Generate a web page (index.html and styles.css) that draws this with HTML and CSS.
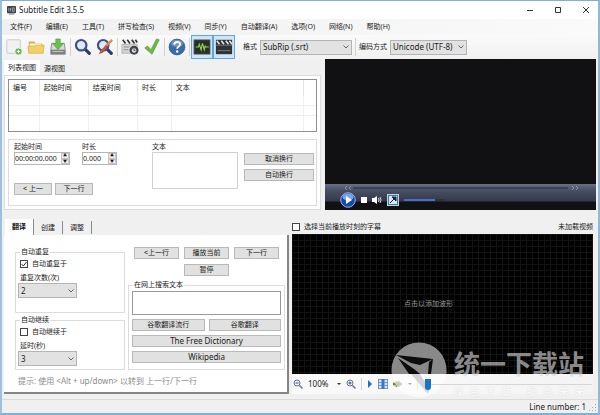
FILE: index.html
```html
<!DOCTYPE html>
<html lang="zh-CN">
<head>
    <meta charset="UTF-8">
    <meta name="viewport" content="width=device-width, initial-scale=1.0">
    <title>Subtitle Edit 3.5.5</title>
    <link rel="stylesheet" href="styles.css">
</head>
<body>
    <div class="window">
        <header class="titlebar">
            <svg class="app-icon" viewBox="0 0 10 10"><rect width="10" height="8" rx="1" fill="#3c4246"/><path d="M2 2v4M4 2v4M6 2h2v4H6z" stroke="#a9b0b3" fill="none"/><path d="M2 9h6" stroke="#777"/></svg>
            <span class="title">Subtitle Edit 3.5.5</span>
            <div class="window-buttons">
                <button aria-label="Minimize"><svg viewBox="0 0 8 8"><path d="M1 4.5h6" stroke="#333"/></svg></button>
                <button aria-label="Maximize"><svg viewBox="0 0 8 8"><path d="M1.5 1.5h5v5h-5z" stroke="#333" fill="none"/></svg></button>
                <button aria-label="Close"><svg viewBox="0 0 8 8"><path d="M1 1l6 6M7 1L1 7" stroke="#333"/></svg></button>
            </div>
        </header>

        <nav class="menu">
            <a href="#">文件(F)</a>
            <a href="#">编辑(E)</a>
            <a href="#">工具(T)</a>
            <a href="#">拼写检查(S)</a>
            <a href="#">视频(V)</a>
            <a href="#">同步(Y)</a>
            <a href="#">自动翻译(A)</a>
            <a href="#">选项(O)</a>
            <a href="#">网络(N)</a>
            <a href="#">帮助(H)</a>
        </nav>

        <div class="toolbar">
            <button class="tool" aria-label="New"><svg viewBox="0 0 20 20"><rect x="2" y="2" width="15" height="15" rx="1" fill="#f0f2f1" stroke="#c3c8c6"/><circle cx="15" cy="15" r="4" fill="#5fb548" stroke="#e4f3df"/><path d="M15 13v4M13 15h4" stroke="#fff" stroke-width="1.3"/></svg></button>
            <button class="tool" aria-label="Open"><svg viewBox="0 0 20 20"><path d="M2 4h6l2 2h7v10H2z" fill="#d9ab43"/><path d="M3 6h13v4H3z" fill="#fff4cf"/><path d="M1 9h7l2-1h9l-1 9H2z" fill="#f3cf68" stroke="#d6a83f" stroke-width=".7"/></svg></button>
            <button class="tool" aria-label="Save"><svg viewBox="0 0 20 20"><path d="M3 6h14l1 7v5H2v-5z" fill="#d6d8da" stroke="#6f7478" stroke-width=".8"/><path d="M2 13h16v5H2z" fill="#7d8286"/><path d="M4 15h12" stroke="#c4c9cc"/><path d="M7.500 1h5v5H16l-6 7-6-7h3.500z" fill="#6cc04a" stroke="#4d9a35" stroke-width=".6"/></svg></button>
            <span class="separator"></span>
            <button class="tool" aria-label="Find"><svg viewBox="0 0 20 20"><path d="M12 12l5 5" stroke="#2d3a70" stroke-width="3.500" stroke-linecap="round"/><circle cx="8" cy="8" r="5.800" fill="#dfe9f7" stroke="#3c4d92" stroke-width="2.400"/></svg></button>
            <button class="tool" aria-label="Replace"><svg viewBox="0 0 20 20"><path d="M12 12l5 5" stroke="#2d3a70" stroke-width="3.500" stroke-linecap="round"/><circle cx="8" cy="8" r="5.800" fill="#dfe9f7" stroke="#3c4d92" stroke-width="2.400"/><path d="M18 2l-8 8" stroke="#e08a3c" stroke-width="2.600"/><path d="M11 8l2 2-5 6-5 2 2-4z" fill="#b65a35"/></svg></button>
            <span class="separator"></span>
            <button class="tool" aria-label="Visual sync"><svg viewBox="0 0 20 20"><path d="M1 7h17v10H1z" fill="#d3d5d6" stroke="#8d9194" stroke-width=".6"/><path d="M1 2h17v4H1z" fill="#eee"/><path d="M2 2l3 4M7 2l3 4M12 2l3 4M16 2l2 3" stroke="#333" stroke-width="1.800"/><path d="M3 10h6M3 13h5" stroke="#888"/><circle cx="14.500" cy="13.500" r="5" fill="#42464a"/><circle cx="14.500" cy="14" r="2.500" fill="#d8dadb"/><path d="M14.500 14v-2M14.500 14h1.500" stroke="#222" stroke-width=".8"/></svg></button>
            <button class="tool" aria-label="Spell check"><svg viewBox="0 0 20 20"><path d="M2 11l3-2 4 4 6-12 3 1-8 16z" fill="#6dbb45" stroke="#4f9f32" stroke-width=".8"/></svg></button>
            <span class="separator"></span>
            <button class="tool" aria-label="Help"><svg viewBox="0 0 20 20"><circle cx="10" cy="10" r="8.800" fill="#3a6ca8" stroke="#28517f" stroke-width=".8"/><ellipse cx="10" cy="6" rx="6.500" ry="4" fill="#6b95c6"/><path d="M7 7.500c0-4 6.500-4 6.500-.5 0 2.500-3.300 2.200-3.300 5" fill="none" stroke="#fff" stroke-width="2"/><circle cx="10.200" cy="15" r="1.300" fill="#fff"/></svg></button>
            <span class="separator"></span>
            <button class="tool pressed" aria-label="Toggle waveform"><svg viewBox="0 0 20 20"><rect x="1" y="2" width="18" height="16" fill="#2a2f2a" stroke="#777" stroke-width=".8"/><path d="M3 10h3l1-3 2 6 1.500-7 2 7 1-4 1 1h3" fill="none" stroke="#86d64c" stroke-width="1.300"/></svg></button>
            <button class="tool pressed" aria-label="Toggle video"><svg viewBox="0 0 20 20"><path d="M1 2h18v16H1z" fill="#303234"/><path d="M2 3l3 4M7 3l3 4M12 3l3 4M16 3l3 4" stroke="#e4e4e4" stroke-width="1.800"/><path d="M1 8h18M3 14h14" stroke="#90959a" stroke-width=".8"/></svg></button>
            <label for="format" class="format-label">格式</label>
            <select id="format" class="format"><option>SubRip (.srt)</option></select>
            <span class="separator"></span>
            <label for="encoding">编码方式</label>
            <select id="encoding" class="encoding"><option>Unicode (UTF-8)</option></select>
        </div>

        <main class="top-row">
            <section class="list-view">
                <div class="tabs">
                    <button class="tab active">列表视图</button>
                    <button class="tab">源视图</button>
                </div>
                <div class="list-panel">
                    <table class="subtitles">
                        <colgroup><col class="col-number"><col class="col-time"><col class="col-time"><col class="col-duration"><col class="col-text"><col></colgroup>
                        <thead>
                            <tr><th>编号</th><th>起始时间</th><th>结束时间</th><th>时长</th><th>文本</th><th></th></tr>
                        </thead>
                        <tbody>
                            <tr><td></td><td></td><td></td><td></td><td></td><td></td></tr>
                            <tr><td></td><td></td><td></td><td></td><td></td><td></td></tr>
                            <tr><td></td><td></td><td></td><td></td><td></td><td></td></tr>
                        </tbody>
                    </table>
                    <div class="editor">
                        <div class="timing">
                            <div class="timing-fields">
                                <div class="field start-field">
                                    <label for="start">起始时间</label>
                                    <div class="spinner"><input id="start" type="text" value="00:00:00.000"><div class="spin"><button aria-label="Start up">▲</button><button aria-label="Start down">▼</button></div></div>
                                </div>
                                <div class="field duration-field">
                                    <label for="duration">时长</label>
                                    <div class="spinner"><input id="duration" type="text" value="0.000"><div class="spin"><button aria-label="Duration up">▲</button><button aria-label="Duration down">▼</button></div></div>
                                </div>
                            </div>
                            <div class="line-buttons">
                                <button class="btn">&lt; 上一</button>
                                <button class="btn">下一行</button>
                            </div>
                        </div>
                        <div class="field text-field">
                            <label for="text">文本</label>
                            <textarea id="text"></textarea>
                        </div>
                        <div class="wrap-buttons">
                            <button class="btn">取消换行</button>
                            <button class="btn">自动换行</button>
                        </div>
                    </div>
                </div>
            </section>

            <section class="video">
                <div class="screen"></div>
                <div class="player">
                    <svg class="seek" viewBox="0 0 270 8" preserveAspectRatio="none"><path d="M28 4h214" stroke="#252b40"/><path d="M22 2l-2 2 2 2M26 2l-2 2 2 2M246 2l2 2-2 2M250 2l2 2-2 2" fill="none" stroke="#9ba3b8" stroke-width=".8"/></svg>
                    <div class="player-controls">
                        <button aria-label="Play"><svg width="16" height="16" viewBox="0 0 16 16"><circle cx="8" cy="8" r="7.300" fill="#1749a8" stroke="#93b5ea"/><ellipse cx="8" cy="5" rx="5.500" ry="3.500" fill="#7da5e5"/><path d="M6 4l6 4-6 4z" fill="#fff"/></svg></button>
                        <button aria-label="Stop"><svg width="6" height="6" viewBox="0 0 6 6"><path d="M0 0h6v6H0z" fill="#fff"/></svg></button>
                        <button aria-label="Mute"><svg width="10" height="10" viewBox="0 0 10 10"><path d="M0 3h2l3-2v8L2 7H0z" fill="#fff"/><path d="M6.500 3q1 2 0 4M8 2q2 3 0 6" fill="none" stroke="#d0d5df"/></svg></button>
                        <button aria-label="Full screen"><svg width="12" height="12" viewBox="0 0 12 12"><rect x=".5" y=".5" width="11" height="11" fill="#3b7ba5" stroke="#c3d4df"/><path d="M2 2h8v8H2z" fill="#dbe6ec"/><path d="M3 9l4-4M5 3h4v4z" fill="#162637" stroke="#162637"/></svg></button>
                        <div class="volume"><div class="volume-level"></div></div>
                    </div>
                </div>
            </section>
        </main>

        <div class="bottom-row">
            <section class="modes">
                <div class="tabs mode-tabs">
                    <button class="tab active">翻译</button>
                    <button class="tab">创建</button>
                    <button class="tab">调整</button>
                </div>
                <div class="mode-panel">
                    <div class="mode-columns">
                        <div class="options">
                            <fieldset class="repeat">
                                <legend>自动重复</legend>
                                <label class="check"><input type="checkbox" checked>自动重复于</label>
                                <label for="repeat-count">重复次数(次)</label>
                                <select id="repeat-count"><option>2</option></select>
                            </fieldset>
                            <fieldset>
                                <legend>自动继续</legend>
                                <label class="check"><input type="checkbox">自动继续于</label>
                                <label for="delay">延时(秒)</label>
                                <select id="delay"><option>3</option></select>
                            </fieldset>
                        </div>
                        <div class="actions">
                            <div class="play-buttons">
                                <button class="btn">&lt;上一行</button>
                                <button class="btn">播放当前</button>
                                <button class="btn">下一行</button>
                                <button class="btn pause">暂停</button>
                            </div>
                            <fieldset class="search">
                                <legend><label for="search">在网上搜索文本</label></legend>
                                <input id="search" type="text">
                                <button class="btn">谷歌翻译流行</button>
                                <button class="btn">谷歌翻译</button>
                                <button class="btn wide">The Free Dictionary</button>
                                <button class="btn wide">Wikipedia</button>
                            </fieldset>
                        </div>
                    </div>
                    <p class="hint">提示: 使用 &lt;Alt + up/down&gt; 以转到 上一行/下一行</p>
                </div>
            </section>

            <section class="wave">
                <div class="wave-header">
                    <label class="check"><input type="checkbox">选择当前播放时刻的字幕</label>
                    <span>未加载视频</span>
                </div>
                <div class="waveform">点击以添加波形</div>
                <div class="wave-toolbar">
                    <button aria-label="Zoom out"><svg width="10" height="10" viewBox="0 0 10 10"><circle cx="4" cy="4" r="3" fill="#eef3fa" stroke="#65758f"/><path d="M6.500 6.500l3 3" stroke="#65758f" stroke-width="1.500"/><path d="M2.500 4h3" stroke="#334d80"/></svg></button>
                    <button class="zoom-level"><span>100%</span><span class="caret"></span></button>
                    <button aria-label="Zoom in"><svg width="10" height="10" viewBox="0 0 10 10"><circle cx="4" cy="4" r="3" fill="#eef3fa" stroke="#65758f"/><path d="M6.500 6.500l3 3" stroke="#65758f" stroke-width="1.500"/><path d="M2.500 4h3M4 2.500v3" stroke="#334d80"/></svg></button>
                    <span class="separator"></span>
                    <button aria-label="Play"><svg width="6" height="8" viewBox="0 0 6 8"><path d="M1 0l4 4-4 4z" fill="#2467d8"/></svg></button>
                    <button aria-label="Lock"><svg width="10" height="10" viewBox="0 0 10 10"><path d="M0 0h10v10H0z" fill="#d5e3f8"/><path d="M3.500 0h3v10h-3z" fill="#3b70c8"/><path d="M0 .5h10M0 3.500h10M0 6.500h10M0 9.500h10M.5 0v10M9.500 0v10" stroke="#4c7cc6" stroke-width=".7"/></svg></button>
                    <button class="speed" aria-label="Speed"><svg width="10" height="8" viewBox="0 0 10 8"><path d="M0 3h3V1l3 3-3 3V5H0zM5 3V1l4 3-4 3V5z" fill="#6f9a45" stroke="#40602c" stroke-width=".5"/></svg><span class="caret"></span></button>
                    <span class="separator"></span>
                    <input class="position" type="range" min="0" max="100" value="1" aria-label="Position">
                </div>
                <div class="watermark">
                    <svg width="56" height="56" viewBox="0 0 56 56"><path d="M.5 28a27.500 27.500 0 0 1 55 0v4H.8z" fill="#a0a0a0" fill-opacity=".85"/><path d="M.8 32h54.400a27.500 27.500 0 0 1-54.400 0z" fill="#fff" fill-opacity=".6"/><path d="M5 13l37 4-13 6-9-2zM7 16l16 11 6 5H18zM42 17l-2 15h-3l1-12z" fill="#0c0c0c"/><path d="M20 32l17 20 2-7-7-8-3-5z" fill="#c2c2c2" fill-opacity=".7"/></svg>
                    <div>
                        <strong>统一下载站</strong>
                        <span>绿色下载 服务未来</span>
                    </div>
                </div>
            </section>
        </div>

        <footer class="statusbar">
            <span>Line number: 1</span>
            <svg width="8" height="8" viewBox="0 0 8 8"><path d="M6 1h1v1H6zM6 4h1v1H6zM6 7h1v1H6zM3 4h1v1H3zM3 7h1v1H3zM0 7h1v1H0z" fill="#aaa"/></svg>
        </footer>
    </div>
</body>
</html>
```
FILE: styles.css
```css
* {
    box-sizing: border-box;
}

body {
    margin: 0;
    background-color: #f0f0f0;
    color: #1a1a1a;
    font-family: "Noto Sans", "Noto Sans CJK SC", sans-serif;
    font-size: 7px;
    line-height: 10px;
}

button, input, select, textarea {
    margin: 0;
    padding: 0;
    color: inherit;
    font: inherit;
}

button {
    border: none;
    background: none;
}

svg {
    display: block;
}

select {
    appearance: none;
    height: 15px;
    padding: 0 12px 0 2px;
    border: 1px solid #b4b4b4;
    border-radius: 0;
    background: #e2e2e2 url("data:image/svg+xml,%3Csvg xmlns='http://www.w3.org/2000/svg' width='6' height='4'%3E%3Cpath d='M.5.5L3 3 5.500.5' fill='none' stroke='%23666'/%3E%3C/svg%3E") no-repeat right 2px center;
    font-size: 8px;
}

fieldset {
    min-width: 0;
    margin: 0;
    border: 1px solid #dcdcdc;
}

input[type="checkbox"] {
    appearance: none;
    width: 8px;
    height: 8px;
    border: 1px solid #444;
    background-color: white;
}

input[type="checkbox"]:checked {
    background-image: url("data:image/svg+xml,%3Csvg xmlns='http://www.w3.org/2000/svg' viewBox='0 0 6 6'%3E%3Cpath d='M.5 3L2.300 5 5.500 1' fill='none' stroke='%23333'/%3E%3C/svg%3E");
}

.check {
    display: flex;
    align-items: center;
    gap: 4px;
}

.btn {
    height: 12px;
    border: 1px solid #b9b9b9;
    background-color: #e1e1e1;
    line-height: 10px;
    overflow: hidden;
    white-space: nowrap;
}

.window {
    border: 1px solid #7fb0d8;
    border-left: 2px solid #9cc0de;
    border-right: 2px solid #8fb8db;
    border-bottom: 2px solid #7fb0d8;
    min-height: 100vh;
    display: flex;
    flex-direction: column;
}

/* Title bar and menu */
.titlebar {
    display: flex;
    align-items: center;
    height: 18px;
    padding: 0 8px 0 5px;
    background-color: white;
}

.app-icon {
    width: 9px;
    height: 9px;
}

.title {
    margin-left: 3px;
    font-size: 8px;
}

.window-buttons {
    display: flex;
    gap: 20px;
    margin-left: auto;
}

.window-buttons svg {
    width: 8px;
    height: 8px;
}

.menu {
    display: flex;
    gap: 14px;
    height: 16px;
    padding: 3px 8px;
    background: linear-gradient(to right, #f0f0f0, #fafafa);
}

.menu a {
    color: inherit;
    text-decoration: none;
}

/* Main toolbar */
.toolbar {
    display: flex;
    align-items: center;
    height: 24px;
    padding-left: 1px;
    background: linear-gradient(#fafafa, #f1f1f1);
}

.tool {
    padding: 2px 1px;
    border: 1px solid transparent;
}

.tool svg {
    width: 18px;
    height: 18px;
}

.tool.pressed {
    border-color: #60a5dc;
    background-color: #cce5f8;
}

.separator {
    width: 1px;
    height: 18px;
    background-color: #d2d2d2;
}

.toolbar .separator {
    margin: 0 1px;
}

.toolbar label {
    margin: 0 3px 0 2px;
}

.toolbar .format-label {
    margin-left: 8px;
}

.format {
    width: 92px;
    margin-right: 2px;
}

.encoding {
    width: 77px;
}

/* List view and video */
.top-row {
    display: grid;
    grid-template-columns: 317fr 271fr;
    gap: 4px;
    padding: 0 2px 0 2px;
}

.tabs {
    display: flex;
    align-items: flex-end;
    height: 16px;
}

.tab {
    height: 13px;
    padding: 0 4px;
}

.tab.active {
    height: 15px;
    background-color: white;
}

.list-panel {
    padding: 3px;
    border: 1px solid #dcdcdc;
    background-color: white;
}

.subtitles {
    width: 100%;
    table-layout: fixed;
    border: 1px solid #8a8f98;
    border-collapse: separate;
    border-spacing: 0;
}

.col-number {
    width: 10%;
}

.col-time {
    width: 16%;
}

.col-duration {
    width: 11%;
}

.col-text {
    width: 43%;
}

.subtitles th {
    height: 16px;
    padding: 0 0 0 4px;
    border-right: 1px solid #e5e5e5;
    font-weight: normal;
    text-align: left;
}

.subtitles td {
    height: 10px;
    padding: 0;
    border-right: 1px solid #f0f0f0;
    border-bottom: 1px solid #f0f0f0;
}

.subtitles th:last-child, .subtitles td:last-child {
    border-right: none;
}

.subtitles tr:last-child td {
    height: 15px;
    border-bottom: none;
}

.editor {
    display: flex;
    gap: 6px;
    min-height: 67px;
    margin-top: 7px;
    padding: 1px 2px 0 5px;
    border: 1px solid #dcdcdc;
}

.timing {
    flex: 1;
}

.timing-fields {
    display: flex;
    gap: 12px;
}

.field {
    display: flex;
    flex-direction: column;
    line-height: 11px;
}

.start-field {
    width: 56px;
}

.duration-field {
    width: 35px;
}

.spinner {
    display: flex;
    height: 13px;
    border: 1px solid #b5b5b5;
    font-size: 7px;
}

.spinner input {
    width: 0;
    flex: 1;
    border: none;
}

.spin {
    display: flex;
    flex-direction: column;
    width: 8px;
}

.spin button {
    flex: 1;
    height: 5px;
    border: 1px solid #c5c5c5;
    background-color: #eee;
    font-size: 4px;
    line-height: 3px;
}

.line-buttons {
    display: flex;
    gap: 3px;
    margin-top: 18px;
}

.line-buttons .btn {
    width: 38px;
}

.text-field {
    width: 86px;
}

.text-field textarea {
    height: 37px;
    border: 1px solid #d0d0d0;
    resize: none;
}

.wrap-buttons {
    display: flex;
    flex-direction: column;
    gap: 4px;
    width: 70px;
    padding-top: 12px;
}

.video {
    display: flex;
    flex-direction: column;
}

.screen {
    flex: 1;
    background-color: #111113;
}

.player {
    height: 26px;
    background: linear-gradient(#686f87, #4a5065 6px, #343a4a 17px, #101114 18px, #111);
}

.seek {
    width: 100%;
    height: 8px;
}

.player-controls {
    display: flex;
    align-items: center;
    gap: 5px;
    padding-left: 15px;
}

.volume {
    width: 41px;
    height: 2px;
    background-color: #303238;
}

.volume-level {
    width: 75%;
    height: 2px;
    background-color: #4a6fc4;
}

/* Modes and waveform */
.bottom-row {
    display: grid;
    grid-template-columns: 285fr 301fr;
    gap: 3px;
    margin-top: 9px;
    padding: 0 5px 0 2px;
}

.mode-tabs {
    padding-left: 1px;
}

.mode-tabs .tab {
    padding: 0 7px;
    margin-bottom: 1px;
    border-right: 1px solid #8a8a8a;
}

.mode-tabs .tab.active {
    height: 16px;
    margin-bottom: 0;
    font-weight: bold;
}

.mode-panel {
    min-height: 159px;
    padding: 12px 2px 0 11px;
    border-right: 2px solid #858585;
    border-bottom: 2px solid #858585;
    background-color: white;
}

.mode-columns {
    display: flex;
    gap: 3px;
}

.options {
    display: flex;
    flex-direction: column;
    gap: 2px;
    width: 110px;
}

.options fieldset {
    display: flex;
    flex-direction: column;
    align-items: flex-start;
    gap: 4px;
    height: 55px;
    padding: 2px 2px;
}

.options .repeat {
    height: 66px;
}

.options label {
    margin-left: 2px;
}

.options legend {
    margin-left: 2px;
    padding: 0 1px;
}

.options select {
    width: 59px;
    margin-top: -4px;
}

.actions {
    flex: 1;
}

.play-buttons {
    display: grid;
    grid-template-columns: repeat(3, 1fr);
    gap: 5px;
    padding: 0 6px;
}

.pause {
    grid-column: 2;
}

.search {
    display: grid;
    grid-template-columns: 1fr 1fr;
    gap: 4px;
    margin-top: 4px;
    padding: 1px 3px 6px;
}

.search legend {
    margin-left: 1px;
    padding: 0 1px;
}

.search input {
    grid-column: span 2;
    width: 100%;
    height: 24px;
    border: 1px solid #999;
}

.search .wide {
    grid-column: span 2;
    font-size: 8px;
}

.hint {
    margin: 6px 0 0 3px;
    color: #8c8c8c;
    font-size: 8px;
}

.wave {
    position: relative;
}

.wave-header {
    display: flex;
    align-items: center;
    justify-content: space-between;
    height: 15px;
}

.waveform {
    display: flex;
    align-items: center;
    justify-content: center;
    height: 140px;
    padding-right: 28px;
    background-color: black;
    background-image: linear-gradient(#121212 1px, transparent 1px), linear-gradient(to right, #121212 1px, transparent 1px);
    background-size: 6px 6px;
    color: #999;
}

.wave-toolbar {
    display: flex;
    align-items: center;
    gap: 5px;
    height: 20px;
    padding: 0 1px;
    background: linear-gradient(to right, #fafafa, #f4f4f4);
}

.wave-toolbar .separator {
    height: 12px;
}

.zoom-level, .speed {
    display: flex;
    align-items: center;
    gap: 5px;
}

.zoom-level {
    gap: 9px;
    font-size: 8px;
}

.caret {
    border: 2px solid transparent;
    border-top-color: #333;
    border-bottom: none;
}

.position {
    appearance: none;
    position: relative;
    z-index: 1;
    flex: 1;
    min-width: 0;
    height: 12px;
    background: linear-gradient(#d6d6d6, #d6d6d6) no-repeat center / 100% 1px;
}

.position::-webkit-slider-thumb {
    appearance: none;
    width: 6px;
    height: 11px;
    border-radius: 0 0 3px 3px;
    background-color: #1675c7;
}

/* Site mark laid over the waveform */
.watermark {
    position: absolute;
    right: 9px;
    bottom: -4px;
    display: flex;
    gap: 7px;
    color: rgba(215, 215, 215, 0.65);
    pointer-events: none;
}

.watermark div {
    display: flex;
    flex-direction: column;
    gap: 4px;
    padding-top: 3px;
}

.watermark strong {
    font-size: 26px;
    line-height: 38px;
}

.watermark span {
    color: white;
    font-size: 9px;
    line-height: 10px;
    text-align: justify;
    text-align-last: justify;
    text-shadow: 0 0 2px #ccc;
}

.statusbar {
    display: flex;
    align-items: center;
    justify-content: flex-end;
    gap: 3px;
    height: 14px;
    margin-top: auto;
    padding-right: 1px;
    border-top: 1px solid #dcdcdc;
    font-size: 8px;
}
```
